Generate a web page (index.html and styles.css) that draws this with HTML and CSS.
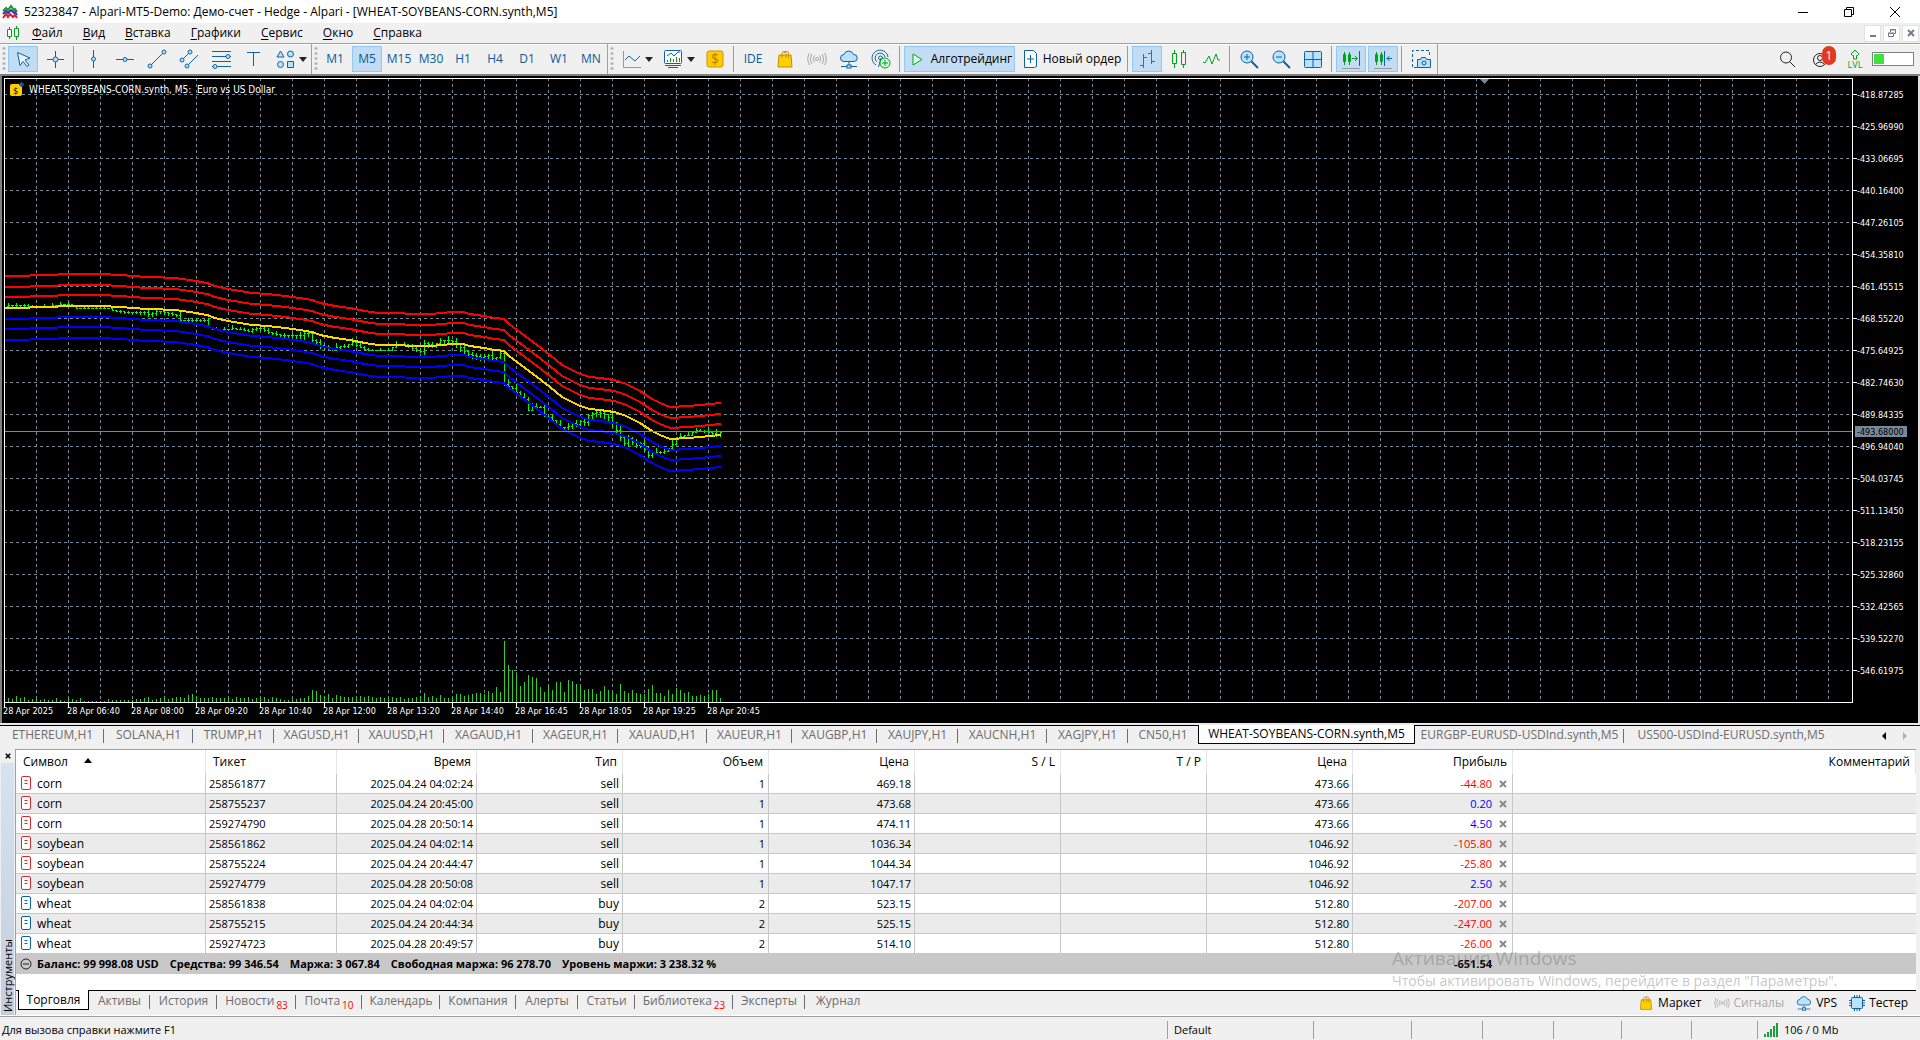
FILE: index.html
```html
<!DOCTYPE html>
<html lang="ru">
<head>
<meta charset="utf-8">
<title>52323847 - Alpari-MT5-Demo: Демо-счет - Hedge - Alpari - [WHEAT-SOYBEANS-CORN.synth,M5]</title>
<link rel="stylesheet" href="styles.css">
</head>
<body>
<svg class="defs" aria-hidden="true">
  <symbol id="i-bag" viewBox="0 0 20 20"><path d="M4 6h12l1 12H3z" fill="#ffd000" stroke="#c88a00"/><path d="M7 9V4.500a2 2 0 0 1 4 0V9M9.500 4a2 2 0 0 1 4 .5V9" fill="none" stroke="#c88a00"/></symbol>
  <symbol id="i-signal" viewBox="0 0 20 20"><circle cx="10" cy="10" r="1.500" fill="none" stroke="currentColor"/><path d="M7.500 6.500q-2.500 3.500 0 7M12.500 6.500q2.500 3.500 0 7M4.800 5q-3 5 0 10M15.200 5q3 5 0 10M2.500 4q-3.500 6 0 12M17.500 4q3.500 6 0 12" fill="none" stroke="currentColor"/></symbol>
  <symbol id="i-cloud" viewBox="0 0 20 20"><path d="M5 12.500a3.500 3.500 0 0 1 0-7 5 5 0 0 1 9.500 0 3.500 3.500 0 0 1 .5 7z" fill="#b9e2ff" stroke="#0b63a5"/><path d="M10 13v3M2 17.500h16" stroke="#0b63a5"/><rect x="8" y="16" width="4" height="3" fill="#b9e2ff" stroke="#0b63a5"/></symbol>
  <symbol id="i-caret" viewBox="0 0 8 5"><path d="M0 0h8L4 5z" fill="#222"/></symbol>
  <symbol id="i-doc" viewBox="0 0 12 16"><rect x="1.500" y="1.500" width="9" height="13" rx="1.500" fill="#fff" stroke="currentColor"/><path d="M4.500 5.500h3M4.500 8.500h3" stroke="currentColor"/></symbol>
  <symbol id="i-x" viewBox="0 0 8 8"><path d="M1 1l6 6M7 1L1 7" stroke="currentColor" stroke-width="2"/></symbol>
</svg>

<div class="app">
  <header class="titlebar">
    <svg class="logo" viewBox="0 0 16 16"><g fill="none" stroke-width="2"><path d="M1 7l3-3 2 2 3-4 3 4 1-1 2 3" stroke="#169b2c"/><path d="M1 10l3-3 2 2 3-3 3 3 1-1 2 3" stroke="#3a35c9"/><path d="M1 14l3-4 2 3 2-3 3 3 2-2 2 3" stroke="#e01b24"/></g></svg>
    <h1 class="title">52323847 - Alpari-MT5-Demo: Демо-счет - Hedge - Alpari - [WHEAT-SOYBEANS-CORN.synth,M5]</h1>
    <div class="winbtns">
      <button aria-label="Свернуть"><svg viewBox="0 0 12 12"><path d="M1 6.500h10"/></svg></button>
      <button aria-label="Развернуть"><svg viewBox="0 0 12 12"><path d="M1.500 3.500h7v7h-7zM3.500 3.500v-2h7v7h-2"/></svg></button>
      <button aria-label="Закрыть"><svg viewBox="0 0 12 12"><path d="M1 1l10 10M11 1L1 11"/></svg></button>
    </div>
  </header>

  <nav class="menubar">
    <svg class="menuicon" viewBox="0 0 14 14"><g fill="#fff" stroke="#00a31a"><path d="M3.500 1v12M10.500 0v14"/><path d="M1.500 3.500h4v7h-4zM8.500 2.500h4v8h-4z"/></g></svg>
    <button><u>Ф</u>айл</button><button><u>В</u>ид</button><button><u>В</u>ставка</button><button><u>Г</u>рафики</button><button><u>С</u>ервис</button><button><u>О</u>кно</button><button><u>С</u>правка</button>
    <div class="childbtns">
      <button aria-label="Свернуть график"><svg viewBox="0 0 10 10"><path d="M2 8h6" stroke-width="2"/></svg></button>
      <button aria-label="Восстановить график"><svg viewBox="0 0 10 10"><path d="M1.500 5.500h5v3h-5zM3.500 4V1.500h5v4H7M1 5h6M3 2h6"/></svg></button>
      <button aria-label="Закрыть график"><svg viewBox="0 0 10 10"><path d="M2 2l6 6M8 2L2 8" stroke-width="2"/></svg></button>
    </div>
  </nav>

  <div class="toolbar">
    <div class="group">
      <span class="grip"></span>
      <button class="tb on" aria-label="Курсор"><svg viewBox="0 0 20 20"><path d="M4.500 3.500L17 9l-5 2 4 5-2 1.500-4-5-3 4z" fill="#e6f4ff" stroke="#0b63a5"/></svg></button>
      <button class="tb" aria-label="Перекрестие"><svg viewBox="0 0 20 20" class="bl"><path d="M2 10.500h17M10.500 2v17"/><circle cx="10.500" cy="10.500" r="2.500"/></svg></button>
      <span class="sep"></span>
      <button class="tb" aria-label="Вертикальная линия"><svg viewBox="0 0 20 20" class="bl"><path d="M10.500 1v18"/><circle cx="10.500" cy="10" r="2"/></svg></button>
      <button class="tb" aria-label="Горизонтальная линия"><svg viewBox="0 0 20 20" class="bl"><path d="M1 10.500h18"/><circle cx="10" cy="10.500" r="2"/></svg></button>
      <button class="tb" aria-label="Трендовая линия"><svg viewBox="0 0 20 20" class="bl"><path d="M3 17L17 3"/><circle cx="3" cy="17" r="2"/><circle cx="17" cy="3" r="2"/></svg></button>
      <button class="tb" aria-label="Канал"><svg viewBox="0 0 20 20" class="bl"><path d="M3 11l8-8M7 18L19 6"/><circle cx="3" cy="11" r="2"/><circle cx="11" cy="3" r="2"/><circle cx="8" cy="17" r="2"/></svg></button>
      <button class="tb" aria-label="Фибоначчи"><svg viewBox="0 0 20 20" class="bl"><path d="M1 2.500h19M1 7.500h19M1 12.500h19M1 17.500h19"/><circle cx="17" cy="7.500" r="2"/><circle cx="4" cy="17.500" r="2"/></svg></button>
      <button class="tb" aria-label="Текст"><svg viewBox="0 0 20 20" class="bl"><path d="M4 3.500h13M10.500 3.500V17"/></svg></button>
      <button class="tb wide" aria-label="Фигуры"><svg viewBox="0 0 20 20" class="bl"><path d="M2 8l3.500-6L9 8zM12.500 12.500h6v6h-6z"/><circle cx="15.500" cy="5" r="3"/><circle cx="5.500" cy="15.500" r="3"/></svg><svg class="caret"><use href="#i-caret"/></svg></button>
    </div>
    <div class="group">
      <span class="grip"></span>
      <button class="tb">M1</button><button class="tb on">M5</button><button class="tb">M15</button><button class="tb">M30</button><button class="tb">H1</button><button class="tb">H4</button><button class="tb">D1</button><button class="tb">W1</button><button class="tb">MN</button>
    </div>
    <div class="group">
      <span class="grip"></span>
      <button class="tb wide" aria-label="Тип графика"><svg viewBox="0 0 20 20"><path d="M2.500 2v16.500H20" fill="none" stroke="#999"/><path d="M4 11l4-4 6 5 5-5" fill="none" stroke="#0b63a5"/></svg><svg class="caret"><use href="#i-caret"/></svg></button>
      <button class="tb wide" aria-label="Индикаторы"><svg viewBox="0 0 20 20"><rect x="1.500" y="1.500" width="17" height="13" rx="1" fill="#fff" stroke="#0b63a5"/><path d="M2 16.500h16M5 18.500h10M4 7l4-3 3 3 4-4h2" fill="none" stroke="#0b63a5"/><path d="M4.500 11v2M7.500 9v4M10.500 10v3M13.500 8v5M16.500 9v4" stroke="#00a31a"/></svg><svg class="caret"><use href="#i-caret"/></svg></button>
      <button class="tb" aria-label="Деньги"><svg viewBox="0 0 20 20"><rect x="2" y="2" width="16" height="16" rx="2" fill="#ffcc00" stroke="#cf9400"/><text x="10" y="15" class="dollar">$</text></svg></button>
      <span class="sep"></span>
      <button class="tb">IDE</button>
      <button class="tb" aria-label="Маркет"><svg><use href="#i-bag"/></svg></button>
      <button class="tb mute" aria-label="Сигналы"><svg><use href="#i-signal"/></svg></button>
      <button class="tb" aria-label="VPS"><svg><use href="#i-cloud"/></svg></button>
      <button class="tb" aria-label="Сообщество"><svg viewBox="0 0 20 20"><g fill="none" stroke="#0b63a5"><path d="M5 16a8 8 0 1 1 12-8M6 13a5 5 0 1 1 8-5M7.500 18L10 9"/><circle cx="9.500" cy="9" r="2"/></g><circle cx="14" cy="14" r="5" fill="#d9ffe0" stroke="#00a31a"/><path d="M14 11v6M11 14h6" stroke="#00a31a"/></svg></button>
      <span class="sep"></span>
      <button class="tb label algo on"><svg viewBox="0 0 20 20"><path d="M6 5l9 5.500L6 16z" fill="#e4ffe8" stroke="#00a31a"/></svg>Алготрейдинг</button>
      <button class="tb label order"><svg viewBox="0 0 20 20"><path d="M4.500 1.500h9l3 3v13l-2 1h-10z" fill="#fff" stroke="#0b63a5"/><path d="M10.500 6v8M7 10h7" stroke="#0b63a5"/></svg>Новый ордер</button>
      <span class="sep"></span>
      <button class="tb on" aria-label="Бары"><svg viewBox="0 0 20 20" class="gr"><path d="M6.500 5v14M3 16.500h3M6.500 8.500H10M14.500 1v14M11 4.500h3M14.500 12.500H18"/></svg></button>
      <button class="tb" aria-label="Свечи"><svg viewBox="0 0 20 20" class="gr"><path d="M5.500 1v18M14.500 1v18"/><path d="M3.500 4.500h4v10h-4zM12.500 3.500h4v12h-4z" fill="#f0f0f0"/></svg></button>
      <button class="tb" aria-label="Линия"><svg viewBox="0 0 20 20" class="gr"><path d="M2 13l2 1 4-7 3 8 4-10 2 6h2"/></svg></button>
      <span class="sep"></span>
      <button class="tb" aria-label="Увеличить"><svg viewBox="0 0 20 20" class="bl"><path d="M12 12l7 7" stroke-width="2"/><circle cx="8" cy="8" r="6"/><path d="M8 5v6M5 8h6"/></svg></button>
      <button class="tb" aria-label="Уменьшить"><svg viewBox="0 0 20 20" class="bl"><path d="M12 12l7 7" stroke-width="2"/><circle cx="8" cy="8" r="6"/><path d="M5 8h6"/></svg></button>
      <button class="tb" aria-label="Плитка"><svg viewBox="0 0 20 20" class="bl"><rect x="1.500" y="2.500" width="17" height="16" rx="1"/><path d="M10 3v15M2 10.500h16"/></svg></button>
      <span class="sep"></span>
      <button class="tb on" aria-label="Сдвиг"><svg viewBox="0 0 20 20" class="gr"><path d="M3.500 3v13M8.500 3v13"/><path d="M2.500 5.500h2v7h-2zM7.500 5.500h2v7h-2zM11 9.500h5M14 7l2.500 2.500L14 12"/><path d="M18.500 2v15" stroke="#0b63a5"/><path d="M1 19.500h18" stroke="#999"/></svg></button>
      <button class="tb on" aria-label="Автопрокрутка"><svg viewBox="0 0 20 20" class="gr"><path d="M3.500 3v13M8.500 3v13"/><path d="M2.500 5.500h2v7h-2zM7.500 5.500h2v7h-2z"/><path d="M11.500 2v15M19 9.500h-5M16.500 7L14 9.500l2.500 2.500" stroke="#0b63a5"/><path d="M1 19.500h18" stroke="#999"/></svg></button>
      <span class="sep"></span>
      <button class="tb" aria-label="Снимок"><svg viewBox="0 0 20 20" class="bl"><path d="M6 18.500H1.500v-17h17V8" fill="none" stroke-dasharray="3 2"/><path d="M6.500 10.500h3l1-2h4l1 2h4v8h-13z"/><circle cx="13" cy="14" r="2"/></svg></button>
    </div>
    <div class="toolright">
      <button class="tb" aria-label="Поиск"><svg viewBox="0 0 20 20"><circle cx="9" cy="8.500" r="5.500" fill="none" stroke="#222"/><path d="M13 13l5 5" stroke="#222"/></svg></button>
      <button class="tb user" aria-label="Профиль"><svg viewBox="0 0 20 20"><g fill="none" stroke="#222"><circle cx="9" cy="11" r="6.500"/><circle cx="9" cy="9" r="2.500"/><path d="M4.500 15.500q4.500-5 9 0"/></g></svg><span class="badge">1</span></button>
      <button class="tb lvl"><svg viewBox="0 0 12 11"><path d="M6 1l4 4-1.500 1.500h-1V10h-3V6.500h-1L2 5z" fill="#eaffea" stroke="#00a31a"/></svg>LVL</button>
      <span class="battery"><span></span></span>
    </div>
  </div>

  <main class="chart"><svg id="chart" role="img" aria-label="WHEAT-SOYBEANS-CORN.synth, M5"></svg></main>

  <nav class="charttabs">
    <button>ETHEREUM,H1</button><button>SOLANA,H1</button><button>TRUMP,H1</button><button>XAGUSD,H1</button><button>XAUUSD,H1</button><button>XAGAUD,H1</button><button>XAGEUR,H1</button><button>XAUAUD,H1</button><button>XAUEUR,H1</button><button>XAUGBP,H1</button><button>XAUJPY,H1</button><button>XAUCNH,H1</button><button>XAGJPY,H1</button><button class="nosep">CN50,H1</button><button class="active">WHEAT-SOYBEANS-CORN.synth,M5</button><button>EURGBP-EURUSD-USDInd.synth,M5</button><button class="nosep">US500-USDInd-EURUSD.synth,M5</button>
    <div class="scroll"><button aria-label="Назад"><svg viewBox="0 0 5 8"><path d="M4 0v8L0 4z" fill="#000"/></svg></button><button aria-label="Вперёд"><svg viewBox="0 0 5 8"><path d="M0 0v8l4-4z" fill="#b0b0b0"/></svg></button></div>
  </nav>

  <section class="toolbox">
    <aside class="side"><button aria-label="Закрыть панель"><svg><use href="#i-x"/></svg></button><span>Инструменты</span></aside>
    <div class="panel">
      <table>
        <colgroup><col class="c-sym"><col class="c-tic"><col class="c-time"><col class="c-n"><col class="c-n"><col class="c-n"><col class="c-n"><col class="c-n"><col class="c-n"><col class="c-pr"><col></colgroup>
        <thead><tr><th class="l">Символ<svg class="asc" viewBox="0 0 8 5"><path d="M4 0l4 5H0z"/></svg></th><th class="l">Тикет</th><th>Время</th><th>Тип</th><th>Объем</th><th>Цена</th><th>S / L</th><th>T / P</th><th>Цена</th><th>Прибыль</th><th>Комментарий</th></tr></thead>
        <tbody>
          <tr class="sell"><td><svg><use href="#i-doc"/></svg>corn</td><td>258561877</td><td>2025.04.24 04:02:24</td><td>sell</td><td>1</td><td>469.18</td><td></td><td></td><td>473.66</td><td class="neg">-44.80<button aria-label="Закрыть"><svg><use href="#i-x"/></svg></button></td><td></td></tr>
          <tr class="sell"><td><svg><use href="#i-doc"/></svg>corn</td><td>258755237</td><td>2025.04.24 20:45:00</td><td>sell</td><td>1</td><td>473.68</td><td></td><td></td><td>473.66</td><td class="pos">0.20<button aria-label="Закрыть"><svg><use href="#i-x"/></svg></button></td><td></td></tr>
          <tr class="sell"><td><svg><use href="#i-doc"/></svg>corn</td><td>259274790</td><td>2025.04.28 20:50:14</td><td>sell</td><td>1</td><td>474.11</td><td></td><td></td><td>473.66</td><td class="pos">4.50<button aria-label="Закрыть"><svg><use href="#i-x"/></svg></button></td><td></td></tr>
          <tr class="sell"><td><svg><use href="#i-doc"/></svg>soybean</td><td>258561862</td><td>2025.04.24 04:02:14</td><td>sell</td><td>1</td><td>1036.34</td><td></td><td></td><td>1046.92</td><td class="neg">-105.80<button aria-label="Закрыть"><svg><use href="#i-x"/></svg></button></td><td></td></tr>
          <tr class="sell"><td><svg><use href="#i-doc"/></svg>soybean</td><td>258755224</td><td>2025.04.24 20:44:47</td><td>sell</td><td>1</td><td>1044.34</td><td></td><td></td><td>1046.92</td><td class="neg">-25.80<button aria-label="Закрыть"><svg><use href="#i-x"/></svg></button></td><td></td></tr>
          <tr class="sell"><td><svg><use href="#i-doc"/></svg>soybean</td><td>259274779</td><td>2025.04.28 20:50:08</td><td>sell</td><td>1</td><td>1047.17</td><td></td><td></td><td>1046.92</td><td class="pos">2.50<button aria-label="Закрыть"><svg><use href="#i-x"/></svg></button></td><td></td></tr>
          <tr class="buy"><td><svg><use href="#i-doc"/></svg>wheat</td><td>258561838</td><td>2025.04.24 04:02:04</td><td>buy</td><td>2</td><td>523.15</td><td></td><td></td><td>512.80</td><td class="neg">-207.00<button aria-label="Закрыть"><svg><use href="#i-x"/></svg></button></td><td></td></tr>
          <tr class="buy"><td><svg><use href="#i-doc"/></svg>wheat</td><td>258755215</td><td>2025.04.24 20:44:34</td><td>buy</td><td>2</td><td>525.15</td><td></td><td></td><td>512.80</td><td class="neg">-247.00<button aria-label="Закрыть"><svg><use href="#i-x"/></svg></button></td><td></td></tr>
          <tr class="buy"><td><svg><use href="#i-doc"/></svg>wheat</td><td>259274723</td><td>2025.04.28 20:49:57</td><td>buy</td><td>2</td><td>514.10</td><td></td><td></td><td>512.80</td><td class="neg">-26.00<button aria-label="Закрыть"><svg><use href="#i-x"/></svg></button></td><td></td></tr>
        </tbody>
        <tfoot><tr><td colspan="9"><svg viewBox="0 0 12 12"><circle cx="6" cy="6" r="5"/><path d="M3 6h6"/></svg><span class="sum">Баланс: 99 998.08 USD</span><span class="sum">Средства: 99 346.54</span><span class="sum">Маржа: 3 067.84</span><span class="sum">Свободная маржа: 96 278.70</span><span class="sum">Уровень маржи: 3 238.32 %</span></td><td class="total">-651.54</td><td></td></tr></tfoot>
      </table>
      <div class="watermark"><p class="w1">Активация Windows</p><p class="w2">Чтобы активировать Windows, перейдите в раздел "Параметры".</p></div>
      <nav class="tooltabs">
        <button class="active">Торговля</button><button>Активы</button><button>История</button><button>Новости<sub>83</sub></button><button>Почта<sub>10</sub></button><button>Календарь</button><button>Компания</button><button>Алерты</button><button>Статьи</button><button>Библиотека<sub>23</sub></button><button>Эксперты</button><button class="nosep">Журнал</button>
        <div class="links">
          <button><svg><use href="#i-bag"/></svg>Маркет</button>
          <button class="mute"><svg><use href="#i-signal"/></svg>Сигналы</button>
          <button><svg><use href="#i-cloud"/></svg>VPS</button>
          <button><svg viewBox="0 0 16 16"><path d="M5.500 0v16M8 0v16M10.500 0v16M0 5.500h16M0 8h16M0 10.500h16" stroke="#0b63a5"/><rect x="2.500" y="2.500" width="11" height="11" rx="1" fill="#b9e2ff" stroke="#0b63a5"/></svg>Тестер</button>
        </div>
      </nav>
    </div>
  </section>

  <footer class="statusbar">
    <span>Для вызова справки нажмите F1</span><span>Default</span><span></span><span></span><span></span><span></span><span></span><span></span>
    <span class="net"><svg viewBox="0 0 14 14"><path d="M1 14v-3M4 14V9M7 14V6M10 14V3M13 14V0" stroke="#1d9e3c" stroke-width="2"/></svg>106 / 0 Mb</span>
  </footer>
</div>
<script src="chart.js"></script>
</body>
</html>
```
FILE: styles.css
```css
* { box-sizing: border-box; }
body { margin: 0; font: 11px/16px "Open Sans", "Noto Sans", sans-serif; color: #000; background: #f0f0f0; }
button { font: inherit; color: inherit; background: none; border: 0; padding: 0; margin: 0; display: flex; align-items: center; justify-content: center; white-space: nowrap; }
svg { display: block; flex: none; }
.defs { position: absolute; width: 0; height: 0; }
.app { min-height: 100vh; display: flex; flex-direction: column; }

.titlebar { display: flex; align-items: center; height: 23px; background: #fff; padding-left: 2px; }
.logo { width: 16px; height: 16px; margin-right: 6px; }
.title { flex: 1; margin: 0; font-size: 12px; font-weight: 400; line-height: 20px; }
.winbtns { display: flex; padding-right: 2px; }
.winbtns button { width: 46px; height: 20px; }
.winbtns svg { width: 12px; height: 12px; fill: none; stroke: #000; }

.menubar { display: flex; align-items: center; height: 20px; padding-left: 6px; font-size: 12px; line-height: 18px; }
.menuicon { width: 14px; height: 14px; margin-right: 2px; }
.menubar > button { padding: 0 10px; }
.menubar u { text-underline-offset: 2px; }
.childbtns { margin-left: auto; display: flex; gap: 2px; padding-right: 1px; }
.childbtns button { width: 17px; height: 17px; background: #fff; border: 1px solid #e2e2e2; }
.childbtns svg { width: 10px; height: 10px; fill: none; stroke: #6d7f90; }

.toolbar { display: flex; height: 33px; border-top: 1px solid #a0a0a0; border-bottom: 2px solid #808080; box-shadow: inset 0 1px #fff; }
.group { display: flex; align-items: center; gap: 2px; padding: 0 1px 0 2px; border-right: 1px solid #a0a0a0; }
.grip { width: 4px; height: 26px; background: radial-gradient(circle, #b8b8b8 1px, transparent 2px) 0 0 / 4px 5px; }
.sep { width: 4px; height: 26px; background: linear-gradient(#999, #999) 1px 0 / 1px 100% no-repeat; }
.tb { width: 30px; height: 26px; font-size: 12px; color: #0b5a96; position: relative; }
.tb svg { width: 20px; height: 20px; }
.tb.on { background: #c1dcf3; box-shadow: inset 0 0 0 1px #90c8f6; }
.tb.wide { width: 40px; justify-content: flex-start; padding-left: 5px; gap: 4px; }
.tb.wide svg.caret { width: 8px; height: 5px; }
.tb.label { color: #000; width: auto; }
.tb.algo { width: 111px; gap: 4px; }
.tb.order { width: 107px; gap: 3px; }
.mute, .tb.mute { color: #a8a8a8; }
.bl { fill: #b9e2ff; stroke: #0b63a5; }
.gr { fill: none; stroke: #00a31a; }
.dollar { font-size: 14px; text-anchor: middle; fill: #b87a00; }
.toolright { margin-left: auto; display: flex; align-items: center; gap: 2px; padding-right: 6px; }
.tb.user { width: 34px; }
.badge { position: absolute; right: 2px; top: 0; width: 14px; height: 19px; border-radius: 8px; background: #e03a1f; color: #fff; line-height: 19px; text-align: center; }
.tb.lvl { flex-direction: column; font-size: 9px; line-height: 10px; color: #00a31a; }
.tb.lvl svg { width: 12px; height: 11px; }
.battery { width: 42px; height: 14px; border: 1px solid #808080; background: #fff; display: flex; padding: 1px; }
.battery span { width: 10px; background: #3fe03f; }

.chart { flex: 1 1 0; min-height: 300px; background: #000; border-left: 2px solid #808080; border-right: 2px solid #e0e0e0; overflow: hidden; position: relative; }
.chart svg { width: 100%; height: 100%; position: absolute; }
.chart text { font: 9px "DejaVu Sans Condensed", "DejaVu Sans", sans-serif; fill: #fff; }
.chart text.dark { fill: #000; }
.chart text.caption { font-size: 10px; }

.charttabs { display: grid; grid-template-columns: 103px 89px 81px 85px 85px 89px 85px 89px 85px 85px 81px 89px 81px 70px 217px 209px 214px 1fr; height: 23px; border-top: 2px solid #e8e8e8; box-shadow: inset 0 1px #000; padding-left: 1px; color: #6d6d6d; font-size: 12px; }
.charttabs > button { position: relative; height: 20px; }
.charttabs > button::after, .tooltabs > button::after { content: ""; position: absolute; right: 0; top: 4px; height: 14px; width: 1px; background: #6d6d6d; }
.charttabs > button.nosep::after, .charttabs > .active::after, .tooltabs > .active::after, .tooltabs > .nosep::after { display: none; }
.charttabs > .active { background: #fff; color: #000; border: 1px solid #000; border-top: 0; height: 19px; }
.scroll { display: flex; justify-content: flex-end; gap: 16px; padding-right: 12px; }
.scroll svg { width: 5px; height: 8px; }

.toolbox { display: flex; margin-top: 3px; padding-right: 4px; border-bottom: 1px solid #fff; }
.side { width: 15px; display: flex; flex-direction: column; align-items: center; }
.side button { height: 14px; width: 15px; }
.side svg { width: 6px; height: 6px; }
.side span { flex: 1; width: 13px; writing-mode: vertical-rl; transform: rotate(180deg); line-height: 13px; background: linear-gradient(to top, #d6e3f0, #c2cede); padding-top: 3px; }
.panel { flex: 1; background: #fff; border-left: 1px solid #a0a0a0; border-top: 1px solid #a0a0a0; position: relative; }
table { width: 100%; table-layout: fixed; border-collapse: separate; border-spacing: 0; }
.c-sym { width: 190px; } .c-tic { width: 131px; } .c-time { width: 140px; } .c-n { width: 146px; } .c-pr { width: 160px; }
th { font-weight: 400; font-size: 12px; height: 24px; padding: 0 5px; text-align: right; border-right: 1px solid #e5e5e5; white-space: nowrap; }
th.l { text-align: left; padding-left: 7px; }
.asc { display: inline-block; width: 8px; height: 5px; margin: 0 0 3px 16px; }
tbody td { height: 20px; padding: 0 3px; line-height: 19px; text-align: right; border-right: 1px solid #c8c8c8; border-bottom: 1px solid #c8c8c8; white-space: nowrap; }
tbody td:last-child { border-right: 0; }
tbody td:first-child, tbody td:nth-child(2) { text-align: left; }
tbody td:first-child { font-size: 12px; }
tbody td:nth-child(4) { font-size: 12px; }
tbody tr:nth-child(even) td { background: #ebebeb; }
td svg { display: inline-block; vertical-align: top; width: 12px; height: 16px; margin: 1px 5px 0 1px; }
.sell > td > svg { color: #d92b2b; } .buy > td > svg { color: #0b63a5; }
td button { display: inline-flex; width: 20px; height: 16px; margin: 2px -4px 0 1px; vertical-align: top; color: #8a8a8a; }
td button svg { width: 8px; height: 8px; margin: 0; }
.neg { color: #f00; } .pos { color: #00f; }
tfoot td { background: #c8c8c8; height: 20px; padding: 0 3px; line-height: 20px; font-weight: 700; }
tfoot svg { height: 12px; fill: none; stroke: #222; margin-top: 4px; }
.sum { margin-right: 11px; }
tfoot .total { text-align: right; padding-right: 21px; }
.watermark { position: absolute; left: 1376px; top: 194px; color: rgba(110,110,110,.4); pointer-events: none; white-space: nowrap; }
.watermark p { margin: 0; }
.w1 { font-size: 19px; line-height: 28px; }
.w2 { font-size: 14px; line-height: 18px; }
.tooltabs { margin-top: 16px; height: 25px; background: #f0f0f0; border-top: 1px solid #000; display: grid; grid-template-columns: 73px 61px 67px 79px 66px 78px 76px 62px 57px 98px 72px 66px 1fr; color: #6d6d6d; }
.tooltabs > button { position: relative; height: 20px; font-size: 12px; }
.tooltabs > .active { background: #fff; color: #000; border: 1px solid #000; border-top: 0; margin: -1px 0 0 2px; }
sub { font-size: 10px; line-height: 10px; color: #f00; margin: 8px 0 0 2px; }
.links { display: flex; justify-content: flex-end; gap: 12px; padding-right: 8px; color: #000; font-size: 12px; }
.links button { gap: 4px; }
.links svg { width: 16px; height: 16px; }

.statusbar { display: grid; grid-template-columns: 1fr 146px 98px 71px 71px 68px 70px 66px 163px; height: 24px; border-top: 1px solid #a0a0a0; padding: 4px 0 1px 2px; line-height: 18px; }
.statusbar span + span { border-left: 1px solid #a0a0a0; padding-left: 6px; }
.net { display: flex; align-items: center; gap: 6px; }
.net svg { width: 14px; height: 14px; }
```
FILE: chart.js
```js
const svg = document.getElementById('chart');
const NS = 'http://www.w3.org/2000/svg';

// Moving average, the centre line of the envelope: [x, y]
const ma = [[2,232],[26,232],[30,231],[54,231],[58,230],[106,230],[112,231],[123,231],[127,232],[148,233],[173,234],[188,236],[205,239],[213,242],[226,245],[238,247],[250,249],[266,250],[283,252],[298,254],[310,256],[318,259],[333,262],[348,264],[363,267],[376,269],[400,269],[406,270],[428,270],[440,269],[450,268],[461,268],[468,270],[482,272],[493,274],[502,275],[507,280],[531,298],[548,311],[560,321],[578,330],[588,333],[598,334],[612,336],[622,339],[638,347],[650,355],[658,359],[668,363],[686,362],[698,361],[708,360],[719,359]];

// Closing levels of the bars: [x, y, range]
const closes = [[6,230,3],[60,229,3],[68,229,3],[74,232,2],[82,232,2],[106,232,2],[111,235,1],[124,236,2],[132,236,2],[140,235,3],[147,238,4],[155,236,4],[173,238,2],[178,243,5],[190,243,5],[203,245,4],[207,254,4],[219,253,2],[232,251,5],[246,255,3],[256,253,6],[268,257,3],[280,258,4],[290,259,4],[299,260,6],[305,256,6],[309,264,4],[318,269,6],[326,271,3],[334,270,6],[342,270,3],[350,268,7],[358,272,4],[367,274,3],[378,273,3],[386,274,3],[392,269,5],[402,269,3],[410,273,5],[418,274,4],[422,265,8],[430,268,5],[438,264,4],[446,265,6],[454,268,6],[463,276,6],[478,280,6],[486,279,6],[492,285,8],[498,278,6],[502,310,8],[510,312,9],[518,319,8],[522,321,8],[526,332,9],[530,329,9],[538,332,8],[542,341,7],[546,342,6],[554,349,6],[558,351,6],[566,349,6],[570,346,5],[574,347,5],[578,344,6],[582,346,7],[586,339,5],[594,337,6],[602,339,6],[606,341,6],[610,346,6],[618,360,6],[619,367,6],[622,366,6],[626,361,6],[630,366,5],[634,369,6],[638,368,6],[642,375,8],[646,381,8],[650,378,8],[658,376,7],[662,374,7],[666,371,6],[670,366,8],[674,360,7],[678,359,6],[686,360,8],[690,357,5],[694,355,5],[698,356,5],[714,356,7],[718,354,7]];

const volumes = [3,10,4,4,3,6,4,5,2,3,4,2,3,2,2,4,2,1,4,3,2,4,1,1,1,1,1,1,3,2,2,2,2,2,2,3,3,4,5,2,3,4,6,3,4,5,5,4,7,8,6,4,4,4,5,4,4,4,5,3,5,4,4,5,3,4,4,5,3,5,4,3,2,2,3,3,4,4,6,12,11,7,6,8,4,7,6,5,5,5,4,6,5,6,5,4,5,4,5,5,4,5,3,4,4,5,6,9,5,6,4,7,4,4,5,8,8,6,7,8,9,9,8,11,9,15,10,61,37,32,28,16,20,27,25,24,15,10,17,12,20,20,10,22,21,18,16,12,13,13,8,11,16,12,10,8,18,11,9,12,9,8,8,13,17,9,9,6,12,8,14,12,9,10,6,6,7,6,8,12,12,4];

const times = ['28 Apr 2025','28 Apr 06:40','28 Apr 08:00','28 Apr 09:20','28 Apr 10:40','28 Apr 12:00','28 Apr 13:20','28 Apr 14:40','28 Apr 16:45','28 Apr 18:05','28 Apr 19:25','28 Apr 20:45'];

function add(name, attrs, text) {
  const el = document.createElementNS(NS, name);
  for (const k in attrs) el.setAttribute(k, attrs[k]);
  if (text) el.textContent = text;
  svg.appendChild(el);
}

function level(list, x) {
  for (let i = 1; i < list.length; i++) {
    if (x <= list[i][0]) {
      const a = list[i - 1], b = list[i], t = Math.max(0, (x - a[0]) / (b[0] - a[0]));
      return a.map((v, k) => v + (b[k] - v) * t);
    }
  }
  return list[list.length - 1];
}

function draw() {
  svg.textContent = '';
  const w = svg.clientWidth, h = svg.clientHeight;
  const left = 2, top = 2, right = w - 66, bottom = h - 21;
  const crisp = { fill: 'none', 'shape-rendering': 'crispEdges' };

  let v = '', g = '';
  for (let x = 34; x < right; x += 32) v += `M${x + .5} ${top}V${bottom}`;
  for (let y = 18; y < bottom; y += 32) g += `M${left} ${y + .5}H${right}`;
  add('path', { ...crisp, d: v + g, stroke: '#778899', 'stroke-dasharray': '3 3' });

  // Volume histogram
  let vol = '';
  const pitch = 4, last = 718, first = last - pitch * (volumes.length - 1);
  volumes.forEach((n, i) => {
    const x = first + i * pitch;
    if (x > left) vol += `M${x + .5} ${bottom}v${-n}`;
  });
  add('path', { ...crisp, d: vol, stroke: '#32cd32' });

  // Price bars
  let bars = '', prev = 230;
  for (let x = 6; x <= 718; x += pitch) {
    const [, y, r] = level(closes, x);
    const wob = Math.sin(x * 1.7) * r / 4;
    const c = Math.round(y + wob);
    const hi = Math.min(prev, c) - Math.round(r * (.3 + .3 * Math.sin(x * 2.3)));
    const lo = Math.max(prev, c) + Math.round(r * (.3 + .3 * Math.cos(x * 3.1)));
    bars += `M${x + .5} ${hi}V${lo + 1}M${x - 1} ${prev + .5}h1M${x + 1} ${c + .5}h1`;
    prev = c;
  }
  add('path', { ...crisp, d: bars, stroke: '#00ff00' });

  // Envelope lines
  [[-32,'#f00'],[-21,'#f00'],[-11,'#f00'],[11,'#00f'],[21,'#00f'],[32,'#00f'],[0,'#ffd700']].forEach(([off, color]) => {
    add('polyline', { ...crisp, points: ma.map(p => p[0] + ',' + (p[1] + off)).join(' '), stroke: color, 'stroke-width': 2 });
  });

  // Current price
  add('path', { ...crisp, d: `M${left} 355.5H${right}`, stroke: '#778899' });
  add('path', { ...crisp, d: `M${left + .5} ${bottom}V${top + .5}H${right + .5}V${bottom + .5}H${left}`, stroke: '#fff' });
  add('path', { d: 'M1478 3h9l-4.500 5z', fill: '#778899' });

  for (let i = 0; 18 + i * 32 < bottom - 8; i++) {
    const y = 18 + i * 32;
    add('path', { ...crisp, d: `M${right} ${y + .5}h5`, stroke: '#fff' });
    add('text', { x: right + 5, y: y + 4 }, (-418.87285 - i * 7.09705).toFixed(5));
  }
  add('rect', { x: right + 3, y: 350, width: 52, height: 11, fill: '#778899' });
  add('text', { x: right + 5, y: 359, class: 'dark' }, '-493.68000');

  times.forEach((t, i) => {
    const x = 2 + i * 64;
    add('path', { ...crisp, d: `M${x + .5} ${bottom}v5`, stroke: '#fff' });
    add('text', { x: Math.max(1, x - 1), y: bottom + 12 }, t);
  });

  // Symbol caption
  add('rect', { x: 8, y: 8, width: 12, height: 12, rx: 2, fill: '#ffcc00' });
  add('text', { x: 11, y: 18, class: 'dark' }, '$');
  add('path', { d: 'M19.500 6v5M17 8.500h5', stroke: '#0b63a5', 'stroke-width': 2 });
  add('text', { x: 27, y: 17, class: 'caption' }, 'WHEAT-SOYBEANS-CORN.synth, M5:\u00a0\u00a0Euro vs US Dollar');
}

draw();
addEventListener('resize', draw);
```
